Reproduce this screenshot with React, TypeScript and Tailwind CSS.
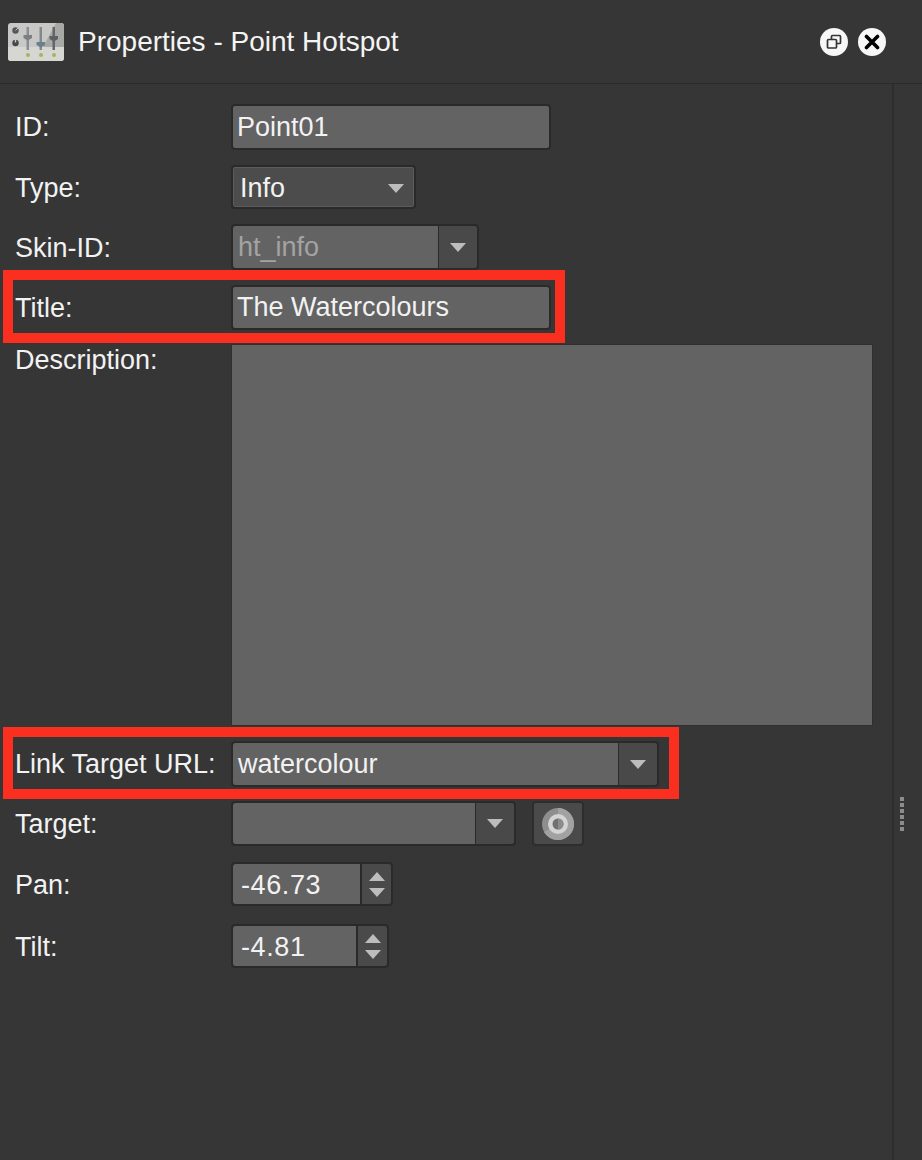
import type { ReactNode } from 'react'

const font = 'font-["Liberation_Sans",Arial,sans-serif]'

function AppIcon() {
  return (
    <svg width="56" height="38" viewBox="0 0 56 38" className="shrink-0">
      <rect width="56" height="38" rx="3" fill="#c8c9c6" />
      <path d="M0 24h56v11a3 3 0 0 1-3 3H3a3 3 0 0 1-3-3z" fill="#d6d7d3" />
      <path d="M35 24 48 0h5a3 3 0 0 1 3 3v21z" fill="#a8a9a7" />
      <circle cx="7.500" cy="7.500" r="3.200" fill="#55585a" />
      <path d="M7.500 7.500l2.500-2.500" stroke="#c8c9c6" strokeWidth="1" />
      <circle cx="7.500" cy="20" r="3.200" fill="#444748" />
      <rect x="6.800" y="16" width="1.400" height="3.500" fill="#c8c9c6" />
      <rect x="18.500" y="4" width="2.500" height="23" fill="#8b8e90" />
      <path d="M15.500 12h8.500v3l-4.250 2.500-4.250-2.500z" fill="#7b7f81" />
      <rect x="31.500" y="4" width="2.500" height="23" fill="#85888a" />
      <path d="M28.500 19h8.500v3l-4.250 2.500-4.250-2.500z" fill="#68808c" />
      <rect x="44.500" y="4" width="2.500" height="23" fill="#626668" />
      <path d="M41.500 13h8.500v3l-4.250 2.500-4.250-2.500z" fill="#5c6062" />
      <circle cx="20" cy="32" r="2" fill="#a0b85c" />
      <circle cx="33" cy="32" r="2" fill="#a0b85c" />
      <circle cx="46" cy="32" r="2" fill="#a0b85c" />
    </svg>
  )
}

function Row({ label, className, labelClass = 'pt-[2px]', children }: { label: string; className: string; labelClass?: string; children: ReactNode }) {
  return (
    <div className={`flex items-center ${className}`}>
      <span className={`w-[231px] shrink-0 pl-[15px] text-[#f2f2f2] ${labelClass}`}>{label}</span>
      {children}
    </div>
  )
}

function Caret() {
  return <div className="h-0 w-0 border-x-[8px] border-t-[9px] border-x-transparent border-t-[#bdbdbd]" />
}

function CaretUp() {
  return <div className="h-0 w-0 border-x-[8px] border-b-[9px] border-x-transparent border-b-[#bdbdbd]" />
}

function Combo({ value, inputClass, muted }: { value?: string; inputClass: string; muted?: boolean }) {
  return (
    <div className="flex h-full rounded-[4px] border-2 border-[#2a2a2a]">
      <div className={`flex h-full items-center rounded-l-[3px] bg-[#636363] pl-[5px] ${muted ? 'text-[#a3a3a3]' : 'text-[#f2f2f2]'} ${inputClass}`}>
        {value}
      </div>
      <div className="flex w-[39px] items-center justify-center rounded-r-[3px] border-l border-[#2a2a2a] bg-[#494949]">
        <Caret />
      </div>
    </div>
  )
}

function Spin({ value, inputClass }: { value: string; inputClass: string }) {
  return (
    <div className="flex h-full rounded-[4px] border-2 border-[#2a2a2a]">
      <div className={`flex h-full items-center rounded-l-[3px] bg-[#636363] pl-[8px] pt-[2px] tracking-[0.6px] text-[#f2f2f2] ${inputClass}`}>
        {value}
      </div>
      <div className="flex w-[31px] flex-col items-center justify-center gap-[7px] rounded-r-[3px] border-l-2 border-[#2a2a2a] bg-[#4a4a4a]">
        <CaretUp />
        <Caret />
      </div>
    </div>
  )
}

function Highlight({ className }: { className: string }) {
  return <div className={`pointer-events-none absolute border-[10px] border-[#fb2f1f] ${className}`} />
}

export default function App() {
  return (
    <div className={`flex h-[1160px] w-[922px] flex-col overflow-hidden bg-[#363636] text-[27px] leading-none ${font}`}>
      <header className="flex h-[84px] shrink-0 items-center border-b border-[#2b2b2b] pl-[8px] pr-[36px]">
        <AppIcon />
        <h1 className="ml-[14px] flex-1 text-[28px] font-normal text-[#f4f4f4]">Properties - Point Hotspot</h1>
        <button className="flex h-[28px] w-[28px] items-center justify-center rounded-full bg-[#f7f7f7]">
          <svg width="18" height="18" viewBox="0 0 18 18" fill="none" stroke="#333" strokeWidth="1.700">
            <rect x="6.500" y="2.500" width="9" height="8" rx="1" />
            <rect x="2.500" y="6.500" width="9" height="8.500" rx="1" fill="#f7f7f7" />
          </svg>
        </button>
        <button className="ml-[10px] flex h-[28px] w-[28px] items-center justify-center rounded-full bg-[#f7f7f7]">
          <svg width="16" height="16" viewBox="0 0 16 16" stroke="#000" strokeWidth="3.600" strokeLinecap="round">
            <path d="M2.500 2.500l11 11M13.500 2.500l-11 11" />
          </svg>
        </button>
      </header>

      <div className="flex flex-1">
        <main className="relative w-[894px] shrink-0 border-r-2 border-[#2d2d2d] pt-[20px]">
          <Row label="ID:" className="h-[46px]" labelClass="">
            <div className="flex h-full w-[320px] items-center rounded-[4px] border-2 border-[#2a2a2a] bg-[#636363] pl-[4px] text-[#f2f2f2]">
              Point01
            </div>
          </Row>
          <Row label="Type:" className="mt-[15px] h-[44px]">
            <div className="flex h-full w-[185px] items-center justify-between rounded-[4px] border-2 border-[#2a2a2a] bg-[#4c4c4c] pl-[7px] pr-[10px] pt-[2px] text-[#f2f2f2] shadow-[inset_0_0_0_1px_#5c5c5c]">
              Info
              <Caret />
            </div>
          </Row>
          <Row label="Skin-ID:" className="mt-[15px] h-[46px]">
            <Combo value="ht_info" muted inputClass="w-[205px]" />
          </Row>
          <div className="relative">
            <Row label="Title:" className="mt-[15px] h-[45px]">
              <div className="flex h-full w-[320px] items-center rounded-[4px] border-2 border-[#2a2a2a] bg-[#636363] pl-[4px] text-[#f2f2f2]">
                The Watercolours
              </div>
            </Row>
            <Highlight className="-top-[15px] left-[3px] h-[73px] w-[562px]" />
          </div>
          <Row label="Description:" className="mt-[14px] h-[382px] !items-start" labelClass="pt-[3px]">
            <div className="h-full w-[642px] border border-[#2f2f2f] bg-[#636363]" />
          </Row>
          <div className="relative">
            <Row label="Link Target URL:" className="mt-[15px] h-[46px]" labelClass="">
              <Combo value="watercolour" inputClass="w-[385px]" />
            </Row>
            <Highlight className="-top-[14px] left-[3px] h-[72px] w-[676px]" />
          </div>
          <Row label="Target:" className="mt-[14px] h-[45px]">
            <Combo inputClass="w-[242px]" />
            <button className="ml-[16px] flex h-full w-[52px] items-center justify-center rounded-[4px] border-2 border-[#2d2d2d] bg-[#4a4a4a]">
              <svg width="32" height="32" viewBox="0 0 32 32">
                <circle cx="16" cy="16" r="16" fill="#8e8e8e" />
                <path d="M16 0a16 16 0 0 1 16 16 16 16 0 0 1-16 16 16 16 0 0 1-14-8l14-8z" fill="#a2a2a2" />
                <circle cx="16" cy="16" r="10" fill="#d4d4d4" />
                <circle cx="16" cy="16" r="5.500" fill="#717171" />
                <path d="M16 10.500a5.500 5.500 0 0 1 0 11z" fill="#8c8c8c" />
              </svg>
            </button>
          </Row>
          <Row label="Pan:" className="mt-[16px] h-[44px]">
            <Spin value="-46.73" inputClass="w-[127px]" />
          </Row>
          <Row label="Tilt:" className="mt-[18px] h-[44px]">
            <Spin value="-4.81" inputClass="w-[123px]" />
          </Row>
        </main>
        <aside className="flex flex-1 flex-col items-center pr-[12px] pt-[713px]">
          <div className="flex flex-col gap-[2px]">
            {[0, 1, 2, 3, 4, 5].map((i) => (
              <div key={i} className="h-[4px] w-[4px] bg-[#8c8c8c]" />
            ))}
          </div>
        </aside>
      </div>
    </div>
  )
}
